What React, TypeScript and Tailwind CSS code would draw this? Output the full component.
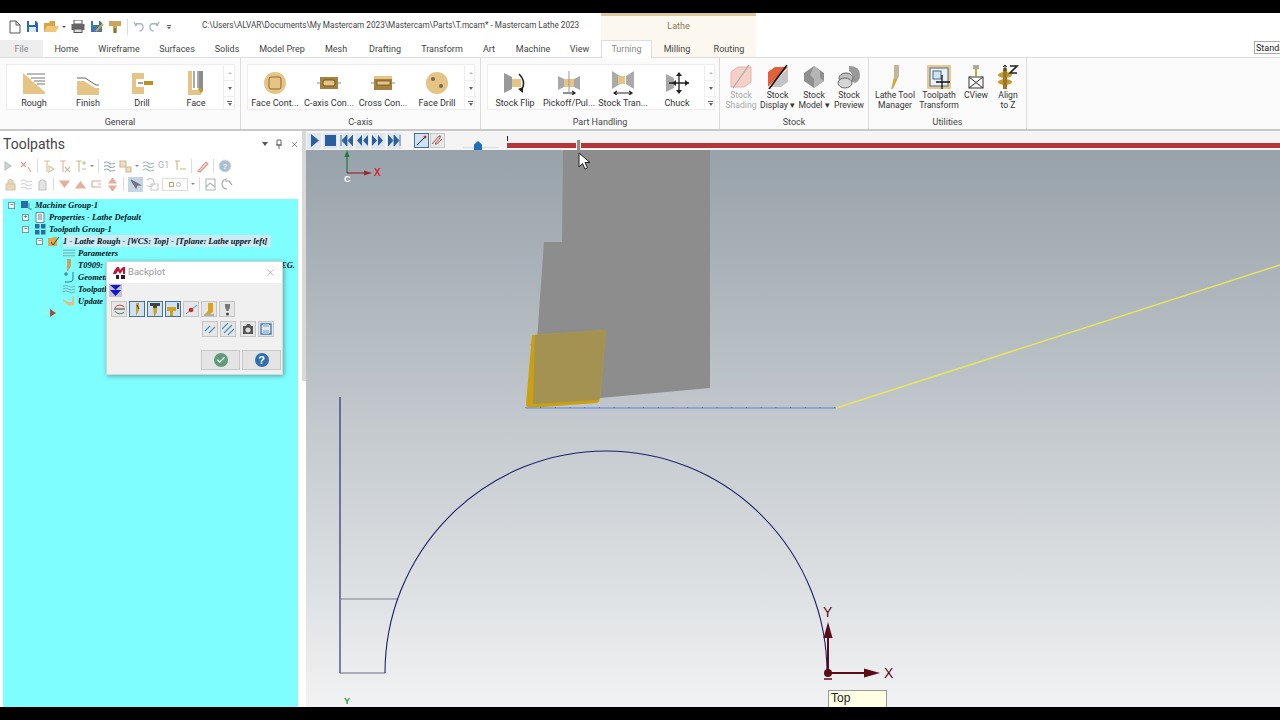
import React from 'react';
import { Check, X } from 'lucide-react';

const TAN = '#e6c485';
const DARK = '#a5813f';

const tabs = [
  { label: 'Home', cls: 'w-[47px]' },
  { label: 'Wireframe', cls: 'w-[58px]' },
  { label: 'Surfaces', cls: 'w-[58px]' },
  { label: 'Solids', cls: 'w-[42px]' },
  { label: 'Model Prep', cls: 'w-[68px]' },
  { label: 'Mesh', cls: 'w-[40px]' },
  { label: 'Drafting', cls: 'w-[58px]' },
  { label: 'Transform', cls: 'w-[56px]' },
  { label: 'Art', cls: 'w-[38px]' },
  { label: 'Machine', cls: 'w-[50px]' },
  { label: 'View', cls: 'w-[43px]' },
];

function Svg({ size = 24, children }: { size?: number; children: React.ReactNode }) {
  return (
    <svg width={size} height={size} viewBox="0 0 24 24" fill="none" className="shrink-0">
      {children}
    </svg>
  );
}

// ribbon icons
const ic = {
  rough: (
    <Svg>
      <path d="M1 2 L23 21 V23 H1 Z" fill={TAN} />
      <path d="M5 3 H23 M9 7 H23 M12 10 H23 M15 13 H23" stroke="#777" strokeWidth="1" />
    </Svg>
  ),
  finish: (
    <Svg>
      <path d="M1 10 H8 L19 17 H23 V24 H1 Z" fill={TAN} />
      <path d="M1 7 H9 L20 14 H23" stroke="#666" strokeWidth="1" />
    </Svg>
  ),
  drill: (
    <Svg>
      <path d="M2 2 H14 V8 H6 V16 H14 V23 H2 Z" fill={TAN} />
      <path d="M8 12 H13" stroke="#888" strokeWidth="1.6" />
      <rect x="14" y="10" width="9" height="4" fill="#b8941f" />
    </Svg>
  ),
  face: (
    <Svg>
      <path d="M4 0 H8 V19 H17 V24 H4 Z" fill={TAN} />
      <path d="M10 0 V17 M14 0 V17" stroke="#555" strokeWidth="1" />
      <path d="M15 0 H19 V20 L17 22 L14 18 H15 Z" fill="#8c8c8c" />
      <path d="M14 17 L19 18 L17 22 Z" fill="#c9a012" />
    </Svg>
  ),
  faceCont: (
    <Svg>
      <circle cx="12" cy="12" r="11" fill={TAN} />
      <rect x="6" y="6" width="12" height="12" rx="2" fill={TAN} stroke="#8a6a30" strokeWidth="1" />
    </Svg>
  ),
  caxis: (
    <Svg>
      <path d="M0 12 H3 M21 12 H24" stroke="#888" strokeWidth="1" />
      <rect x="3" y="6" width="18" height="12" fill={DARK} />
      <rect x="6" y="9" width="12" height="6" rx="2" fill={TAN} stroke="#6e5526" strokeWidth="1" />
    </Svg>
  ),
  cross: (
    <Svg>
      <path d="M0 12 H3 M21 12 H24" stroke="#888" strokeWidth="1" />
      <rect x="3" y="5" width="18" height="14" fill={DARK} />
      <rect x="6" y="10" width="13" height="4" fill={TAN} stroke="#6e5526" strokeWidth="0.8" />
      <rect x="3" y="5" width="18" height="3" fill={TAN} />
    </Svg>
  ),
  faceDrill: (
    <Svg>
      <circle cx="12" cy="12" r="11" fill={TAN} />
      <circle cx="8" cy="8" r="2" fill="#7a6a50" />
      <circle cx="16" cy="15" r="2" fill="#7a6a50" />
    </Svg>
  ),
  flip: (
    <Svg>
      <path d="M1 2 L9 6 V18 L1 22 Z" fill="#999" />
      <rect x="9" y="8" width="9" height="8" fill={TAN} />
      <path d="M16 3 Q24 11 18 20" stroke="#222" strokeWidth="1.6" />
      <path d="M15 18 L20 22 L20 16 Z" fill="#222" />
    </Svg>
  ),
  pickoff: (
    <Svg>
      <path d="M1 5 L7 8 V16 L1 19 Z M23 5 L17 8 V16 L23 19 Z" fill="#a8a8a8" />
      <rect x="7" y="8" width="10" height="8" fill={TAN} />
      <path d="M12 0 V21" stroke="#999" strokeWidth="1" />
      <path d="M6 22 H18 M15 20 L18 22 L15 24" stroke="#222" strokeWidth="1.2" />
    </Svg>
  ),
  transfer: (
    <Svg>
      <path d="M1 0 L9 5 V13 L1 18 Z M23 0 L15 5 V13 L23 18 Z" fill="#aaa" />
      <rect x="7" y="5" width="7" height="8" fill={TAN} />
      <path d="M3 22 H21 M6 20 L3 22 L6 24 M18 20 L21 22 L18 24" stroke="#222" strokeWidth="1.2" />
    </Svg>
  ),
  chuck: (
    <Svg>
      <path d="M1 3 L9 7 V17 L1 21 Z" fill="#a8a8a8" />
      <path d="M14 2 V22 M4 12 H24" stroke="#222" strokeWidth="1.3" />
      <path d="M14 1 L11 5 H17 Z M14 23 L11 19 H17 Z M24 12 L20 9 V15 Z M7 12 L11 9 V15 Z" fill="#222" />
    </Svg>
  ),
  shading: (
    <Svg>
      <path d="M2 7 L9 2 L22 2 V17 L15 22 H2 Z" fill="#f5d0c8" stroke="#e3b5ac" strokeWidth="1" />
      <path d="M4 23 L20 0" stroke="#a8a8a8" strokeWidth="1.2" />
    </Svg>
  ),
  display: (
    <Svg>
      <path d="M2 7 L9 2 H22 L2 22 Z" fill="#e0603a" />
      <path d="M22 3 V17 L15 22 H4 Z" fill="#c4c4c4" />
      <path d="M3 24 L21 0" stroke="#111" strokeWidth="1.6" />
    </Svg>
  ),
  model: (
    <Svg>
      <path d="M2 8 L12 1 L22 8 V16 L12 23 L2 16 Z" fill="#8f8f8f" />
      <path d="M12 1 L18 6 V13 L22 16 L12 23 V14 L8 10 Z" fill="#b5b5b5" />
    </Svg>
  ),
  preview: (
    <Svg>
      <path d="M12 1 Q23 1 23 10 Q23 16 18 18 L14 16 Q18 10 12 6 Z" fill="#999" />
      <ellipse cx="9" cy="13" rx="7" ry="5" fill="#c0c0c0" stroke="#666" strokeWidth="1" />
      <ellipse cx="8" cy="18" rx="7" ry="5" fill="#d5d5d5" stroke="#666" strokeWidth="1" />
    </Svg>
  ),
  tool: (
    <Svg>
      <path d="M11 0 H16 V11 L10 24 H8 L11 12 Z" fill="#c2b79a" />
      <path d="M11 14 L14 14 L9 24 Z" fill="#e0a800" />
    </Svg>
  ),
  transform: (
    <Svg>
      <rect x="0" y="0" width="24" height="24" fill="#e8c98e" />
      <rect x="3" y="3" width="18" height="18" fill="#e9f1f8" stroke="#4d6a85" strokeWidth="1" />
      <rect x="6" y="6" width="8" height="8" fill="#cfe0ee" stroke="#4d6a85" strokeWidth="1" />
      <path d="M15 10 V24 M9 17 H23" stroke="#111" strokeWidth="1.3" />
    </Svg>
  ),
  cview: (
    <Svg>
      <path d="M9 0 H15 V4 H9 Z" fill="#aaa" />
      <path d="M11 4 H13 V11 H11 Z" fill="#d1a21c" />
      <rect x="5" y="12" width="14" height="11" stroke="#333" strokeWidth="1" />
      <path d="M5 12 L19 23 M19 12 L5 23" stroke="#333" strokeWidth="1" />
    </Svg>
  ),
  align: (
    <Svg>
      <ellipse cx="9" cy="10" rx="7" ry="3" fill="#c79a2c" />
      <ellipse cx="9" cy="17" rx="7" ry="3" fill="#c79a2c" />
      <rect x="7" y="3" width="4" height="21" fill="#9c7622" />
      <path d="M9 0 V6 M7 2 L9 0 L11 2" stroke="#222" strokeWidth="1" />
      <path d="M14 1 H21 L14 8 H21" stroke="#222" strokeWidth="1.6" />
    </Svg>
  ),
};

function RibbonBtn({ icon, label }: { icon: React.ReactNode; label: string }) {
  return (
    <div className="w-[54px] h-full flex flex-col items-center shrink-0">
      <div className="h-[24px] mt-[6px]">{icon}</div>
      <span className="mt-[2px] text-[9px] leading-[12px] text-[#333] whitespace-nowrap">{label}</span>
    </div>
  );
}

function Scroller() {
  return (
    <div className="w-[12px] h-full border-l border-[#eeeeee] flex flex-col text-[#777] shrink-0">
      <div className="h-[16px] border-b border-[#eeeeee] flex items-center justify-center">
        <div className="w-0 h-0 border-x-[2px] border-x-transparent border-b-[2px] border-b-[#bbbbbb]" />
      </div>
      <div className="h-[16px] border-b border-[#eeeeee] flex items-center justify-center">
        <div className="w-0 h-0 border-x-[2.5px] border-x-transparent border-t-[3px] border-t-[#666666]" />
      </div>
      <div className="flex-1 flex flex-col items-center justify-center gap-[1px]">
        <div className="w-[5px] h-px bg-[#666666]" />
        <div className="w-0 h-0 border-x-[2.5px] border-x-transparent border-t-[3px] border-t-[#666666]" />
      </div>
    </div>
  );
}

function Group({ label, cls, inner, children }: { label: string; cls: string; inner?: string; children: React.ReactNode }) {
  return (
    <div className={`${cls} h-full flex flex-col border-r border-[#dddddd] shrink-0`}>
      <div className={`h-[48px] mt-[6px] flex ${inner ?? 'ml-[6px]'}`}>{children}</div>
      <div className="flex-1 flex items-center justify-center text-[9px] text-[#444] pt-[6px]">{label}</div>
    </div>
  );
}

function Gallery({ cls, children }: { cls: string; children: React.ReactNode }) {
  return (
    <div className={`${cls} h-full flex bg-white border border-[#eeeeee] justify-between`}>
      <div className="flex">{children}</div>
      <Scroller />
    </div>
  );
}

function BigBtn({ icon, lines, cls, muted }: { icon: React.ReactNode; lines: React.ReactNode[]; cls: string; muted?: boolean }) {
  return (
    <div className={`${cls} flex flex-col items-center shrink-0 ${muted ? 'text-[#aaaaaa]' : 'text-[#333]'}`}>
      <div className="h-[24px] mt-[1px]">{icon}</div>
      <div className="mt-[2px] text-[8.6px] leading-[9.500px] text-center whitespace-nowrap">
        {lines.map((l, i) => (
          <div key={i}>{l}</div>
        ))}
      </div>
    </div>
  );
}

// quick access toolbar
function QuickAccess() {
  return (
    <div className="w-[190px] flex items-center pl-[9px] gap-[5px]">
      <svg width="12" height="14" viewBox="0 0 12 14"><path d="M1 1 H7 L11 5 V13 H1 Z M7 1 V5 H11" fill="#fff" stroke="#555" /></svg>
      <svg width="13" height="13" viewBox="0 0 13 13"><path d="M1 1 H10 L12 3 V12 H1 Z" fill="#2a6aa8" /><rect x="3" y="1" width="6" height="4" fill="#fff" /><rect x="3" y="7" width="7" height="5" fill="#dbe7f2" /></svg>
      <svg width="15" height="13" viewBox="0 0 15 13"><path d="M0 3 H5 L6 1 H11 V12 H0 Z" fill="#d9a33f" /><path d="M3 6 H15 L12 12 H0 Z" fill="#efc777" /></svg>
      <div className="w-0 h-0 -ml-[2px] border-x-[2px] border-x-transparent border-t-[2px] border-t-[#555555]" />
      <svg width="14" height="13" viewBox="0 0 14 13"><rect x="3" y="0" width="8" height="4" fill="#fff" stroke="#555" /><rect x="0.5" y="4" width="13" height="6" fill="#666" /><rect x="3" y="9" width="8" height="3.5" fill="#ddd" stroke="#555" /></svg>
      <svg width="14" height="13" viewBox="0 0 14 13"><path d="M1 1 H10 L12 3 V12 H1 Z" fill="#3d78b2" /><rect x="3" y="1" width="6" height="4" fill="#fff" /><path d="M6 11 L13 4" stroke="#d9a33f" strokeWidth="2" /></svg>
      <svg width="13" height="14" viewBox="0 0 13 14"><path d="M0 1 H12 V6 H8 V13 H4 V6 H0 Z" fill="#c9a45a" /><rect x="5" y="8" width="2" height="5" fill="#8a7038" /></svg>
      <div className="w-px h-[16px] bg-[#dddddd]" />
      <svg width="11" height="11" viewBox="0 0 12 12"><path d="M3 3 H8 Q11 3 11 7 Q11 10 7 11 M1 1 L3 5 L6 2" stroke="#a9b4c2" strokeWidth="1.4" fill="none" /></svg>
      <svg width="11" height="11" viewBox="0 0 12 12"><path d="M9 3 H4 Q1 3 1 7 Q1 10 5 11 M11 1 L9 5 L6 2" stroke="#a9b4c2" strokeWidth="1.4" fill="none" /></svg>
      <div className="flex flex-col items-center gap-[1px] ml-[2px]">
        <div className="w-[4px] h-px bg-[#555555]" />
        <div className="w-0 h-0 border-x-[2px] border-x-transparent border-t-[2px] border-t-[#555555]" />
      </div>
    </div>
  );
}

// faded panel toolbar icons
function T({ d, c = '#9aa5ad', fill }: { d: string; c?: string; fill?: string }) {
  return (
    <svg width="13" height="13" viewBox="0 0 13 13" className="shrink-0 opacity-80">
      <path d={d} stroke={c} strokeWidth="1.1" fill={fill ?? 'none'} />
    </svg>
  );
}
const Sep = () => <div className="w-px h-[14px] bg-[#dddddd] mx-[1px] shrink-0" />;
const Drop = () => <div className="w-0 h-0 border-x-[2px] border-x-transparent border-t-[2px] border-t-[#888888] shrink-0" />;

function PanelToolbars() {
  const waves = 'M1 3 Q4 1 6 3 T12 3 M1 6.500 Q4 4.500 6 6.500 T12 6.500 M1 10 Q4 8 6 10 T12 10';
  return (
    <div className="pl-[4px] h-[36px] flex flex-col text-[#999]">
      <div className="h-[18px] flex items-center gap-[3px]">
        <T d="M1 2 L7 6 L1 10 Z" c="#a8b0b0" fill="#c6cdc9" />
        <T d="M1 2 L6 7 M6 2 L1 7 M8 7 L11 12" c="#d98080" />
        <Sep />
        <T d="M2 1 H8 M5 1 V12 M7 6 L12 9 L7 12 Z" c="#c6b37f" />
        <T d="M2 1 H8 M5 1 V12 M7 7 L12 12 M12 7 L7 12" c="#d8a18a" />
        <T d="M2 1 H8 M5 1 V12 M8 3 H12 M10 1 V5 M8 9 H12" c="#b9ad7a" />
        <Drop />
        <Sep />
        <T d={waves} c="#7d95a8" />
        <T d="M1 1 H7 V7 H1 Z M7 7 H12 V12 H7 Z" c="#c4a878" fill="#e5d6b6" />
        <Drop />
        <T d={waves} c="#8da0ae" />
        <span className="text-[9px] w-[13px] text-[#b5b5b5]">G1</span>
        <T d="M3 1 V10 M1 1 H6 M6 9 H12" c="#c2a65f" />
        <Sep />
        <T d="M2 11 L10 2 L12 4 L4 12 Z" c="#d47a7a" fill="#f0d6a8" />
        <Sep />
        <svg width="14" height="14" viewBox="0 0 14 14" className="shrink-0">
          <circle cx="7" cy="7" r="6" fill="#a9bdd4" stroke="#d5dee8" />
          <text x="7" y="10" fontSize="8" fontWeight="700" textAnchor="middle" fill="#fff" fontFamily="Liberation Sans, sans-serif">?</text>
        </svg>
      </div>
      <div className="h-[18px] flex items-center gap-[3px]">
        <T d="M2 6 H11 V12 H2 Z M4 6 V3 Q6.500 0 9 3 V6" c="#c8b68f" fill="#dfcfa9" />
        <T d={waves} c="#c5c9c9" />
        <T d="M3 12 V4 Q6.500 0 10 4 V12 Z" c="#b5b5b5" fill="#dddddd" />
        <Sep />
        <T d="M2 3 H11 L6.500 9 Z" c="#e09a85" fill="#e09a85" />
        <T d="M2 10 H11 L6.500 4 Z" c="#e09a85" fill="#e09a85" />
        <T d="M2 3 H11 M2 3 V9 H11 M8 6 H11" c="#d98f7a" />
        <T d="M6.500 0 L10 5 H3 Z M6.500 13 L10 8 H3 Z" c="#e09a85" fill="#e09a85" />
        <Sep />
        <div className="w-[15px] h-[15px] bg-[#c5d5e4] flex items-center justify-center shrink-0">
          <T d="M2 2 L7 10 L8 7 L11 7 Z" c="#556" fill="#667" />
        </div>
        <T d="M1 2 A4 4 0 1 1 1 7 M5 6 H12 V12 H5 Z" c="#bcbcbc" />
        <div className="w-[26px] h-[13px] border border-[#dddddd] flex items-center justify-center gap-[2px] shrink-0">
          <div className="w-[5px] h-[5px] border border-[#c2a65f]" />
          <div className="w-[5px] h-[5px] rounded-full border border-[#bbbbbb]" />
        </div>
        <Drop />
        <Sep />
        <T d="M2 1 H11 V12 H2 Z M2 9 L6 5 L11 9" c="#9aa5ad" />
        <T d="M7 1 A5 5 0 1 0 7 11 M5 3 H9 L12 7" c="#7c8a9c" />
      </div>
    </div>
  );
}

function TreeRow({ pad, icon, box, children }: { pad: string; icon?: React.ReactNode; box?: '+' | '-'; children: React.ReactNode }) {
  return (
    <div className={`h-[12px] flex items-center ${pad} whitespace-nowrap`}>
      {box && (
        <div className="w-[7px] h-[7px] border border-[#7a9a9a] bg-[#e6fbfb] flex items-center justify-center text-[7px] leading-none text-[#334] mr-[5px] shrink-0">
          {box === '+' ? '+' : '−'}
        </div>
      )}
      <div className="w-[12px] h-[12px] flex items-center justify-center mr-[2px] shrink-0">{icon}</div>
      {children}
    </div>
  );
}

function Tree() {
  return (
    <div className="relative ml-[3px] w-[295px] h-[508px] bg-[#7ffeff] text-[#03141c] text-[8.5px] font-bold italic font-['Liberation_Serif',serif]">
      <TreeRow pad="pl-[5px]" box="-" icon={<svg width="12" height="10" viewBox="0 0 12 10"><path d="M1 1 H8 V8 H1 Z" fill="#2a6aa8" /><path d="M9 3 V9 H12" stroke="#4c8a8a" fill="none" /></svg>}>
        <span className="ml-[1px]">Machine Group-1</span>
      </TreeRow>
      <TreeRow pad="pl-[19px]" box="+" icon={<svg width="10" height="11" viewBox="0 0 10 11"><path d="M1 .5 H9 V10.500 H1 Z M3 3 H7 M3 5 H7 M3 7 H7" stroke="#667" fill="#eaf7f7" strokeWidth=".8" /></svg>}>
        <span className="ml-[1px]">Properties - Lathe Default</span>
      </TreeRow>
      <TreeRow pad="pl-[19px]" box="-" icon={<svg width="11" height="11" viewBox="0 0 11 11"><path d="M0 0 H4.500 V4.500 H0 Z M6 0 H10.500 V4.500 H6 Z M0 6 H4.500 V10.500 H0 Z M6 6 H10.500 V10.500 H6 Z" fill="#2a6aa8" /></svg>}>
        <span className="ml-[1px]">Toolpath Group-1</span>
      </TreeRow>
      <TreeRow pad="pl-[33px]" box="-" icon={<svg width="12" height="11" viewBox="0 0 12 11"><path d="M0 2 H4 L5 1 H9 V10 H0 Z" fill="#e0a94f" /><path d="M3 6 L5 9 L11 1" stroke="#444" fill="none" /></svg>}>
        <span className="ml-[1px] bg-[#cde9f4] pr-[2px] w-[208px]">1 - Lathe Rough - [WCS: Top] - [Tplane: Lathe upper left]</span>
      </TreeRow>
      <TreeRow pad="pl-[60px]" icon={<svg width="13" height="10" viewBox="0 0 13 10"><path d="M0 2 H13 M0 5 H13 M0 8 H13" stroke="#6f9aa0" strokeWidth=".9" /></svg>}>
        <span className="ml-[1px]">Parameters</span>
      </TreeRow>
      <TreeRow pad="pl-[60px]" icon={<svg width="8" height="12" viewBox="0 0 8 12"><path d="M2 0 H6 V7 L3 12 H2 Z" fill="#c9a45a" /></svg>}>
        <span className="ml-[1px] w-[217px] flex justify-between">
          <span>T0909:</span>
          <span>OD ROUGH RIGHT - 80 DEG.</span>
        </span>
      </TreeRow>
      <TreeRow pad="pl-[60px]" icon={<svg width="12" height="12" viewBox="0 0 12 12"><path d="M5 3 H1 M3 1 V5 M10 1 V8 Q10 11 6 11 H2" stroke="#2b7a7a" fill="none" /></svg>}>
        <span className="ml-[1px]">Geometry</span>
      </TreeRow>
      <TreeRow pad="pl-[60px]" icon={<svg width="13" height="10" viewBox="0 0 13 10"><path d="M0 2 Q3 0 6 2 T13 2 M0 5 Q3 3 6 5 T13 5 M0 8 Q3 6 6 8 T13 8" stroke="#6f9aa0" fill="none" strokeWidth=".9" /></svg>}>
        <span className="ml-[1px]">Toolpath</span>
      </TreeRow>
      <TreeRow pad="pl-[60px]" icon={<svg width="13" height="12" viewBox="0 0 13 12"><path d="M0 6 L6 11 H12 V1 L10 1 V7 H6 L0 4 Z" fill="#e0be84" /></svg>}>
        <span className="ml-[1px]">Update</span>
      </TreeRow>
      {/* tree guide lines */}
      <div className="absolute left-[41px] top-[43px] w-px h-[70px] border-l border-dotted border-[#b7f5b0]" />
      <div className="absolute left-[41px] top-[113px] w-[6px] h-px border-t border-dotted border-[#b7f5b0]" />
      <div className="absolute left-[47px] top-[110px] w-0 h-0 border-y-[4px] border-y-transparent border-l-[6px] border-l-[#b04a3a]" />
    </div>
  );
}

function DlgBtn({ cls, active, children }: { cls?: string; active?: boolean; children: React.ReactNode }) {
  return (
    <div className={`w-[16px] h-[16px] flex items-center justify-center border shrink-0 ${active ? 'bg-[#cde3f5] border-[#4a6d94]' : 'bg-[#e6e6e6] border-[#c4c4c4]'} ${cls ?? ''}`}>
      {children}
    </div>
  );
}

function Backplot() {
  return (
    <div className="absolute left-[106px] top-[130px] w-[177px] h-[114px] bg-[#f0f0f0] border border-[#d5d5d5] shadow-[1px_1px_5px_rgba(0,0,0,0.35)] flex flex-col">
      <div className="h-[21px] bg-white flex items-center pl-[6px] pr-[6px] shrink-0">
        <svg width="13" height="13" viewBox="0 0 13 13" className="mr-[1px]">
          <path d="M1 5 L4 1 H6 L7 4 L10 1 H12 V8 H10 V4 L7 8 L5 5 L3 8 H0 Z" fill="#b5183a" />
          <path d="M3 9 H6 V13 H3 Z M8 9 H12 V13 H8 Z" fill="#44121f" />
        </svg>
        <span className="ml-[1px] text-[9.5px] text-[#9a9a9a]">Backplot</span>
        <X size={11} strokeWidth={1.2} className="ml-auto text-[#8f8f8f]" />
      </div>
      <div className="pl-[2px] pt-[1px]">
        <div className="w-[13px] h-[13px] bg-[#c4c4d0] flex items-center justify-center">
          <svg width="11" height="11" viewBox="0 0 11 11"><path d="M0 0 H11 L5.500 5 Z M0 5 H11 L5.500 11 Z" fill="#1414cc" /></svg>
        </div>
      </div>
      <div className="flex gap-[2px] pl-[4px] mt-[4px]">
        <DlgBtn>
          <svg width="13" height="13" viewBox="0 0 13 13"><path d="M1 6 H12" stroke="#3a3a3a" /><path d="M2 5 A5 4 0 0 1 11 4" stroke="#c44a3a" fill="none" /><path d="M2 8 A5 4 0 0 0 11 9" stroke="#3a8a5a" fill="none" /></svg>
        </DlgBtn>
        <DlgBtn active>
          <svg width="11" height="13" viewBox="0 0 11 13"><path d="M4 0 H7 V7 L4 13 Z" fill="#d1a21c" /><path d="M5 2 L7 6" stroke="#333" /></svg>
        </DlgBtn>
        <DlgBtn active>
          <svg width="12" height="13" viewBox="0 0 12 13"><path d="M1 0 H11 V3 H8 V5 H4 V3 H1 Z" fill="#444" /><path d="M4 5 H8 V9 L6 13 H5 Z" fill="#d1a21c" /></svg>
        </DlgBtn>
        <DlgBtn active>
          <svg width="13" height="13" viewBox="0 0 13 13"><path d="M0 4 H9 V8 H6 V13 H3 V8 H0 Z" fill="#d1a21c" /><path d="M10 0 H12 V6 H10 Z" fill="#555" /></svg>
        </DlgBtn>
        <DlgBtn>
          <svg width="13" height="13" viewBox="0 0 13 13"><path d="M1 11 L12 2" stroke="#4a9ad0" /><circle cx="6" cy="7" r="2.300" fill="#d8262c" /></svg>
        </DlgBtn>
        <DlgBtn>
          <svg width="11" height="13" viewBox="0 0 11 13"><path d="M4 0 H9 V9 L6 11 H1 L4 8 Z" fill="#d9a520" /><path d="M0 12 H10" stroke="#777" /></svg>
        </DlgBtn>
        <DlgBtn>
          <svg width="9" height="13" viewBox="0 0 9 13"><path d="M2 1 H7 V4 L5.500 8 H3.500 L2 4 Z" fill="#777" /><circle cx="4.500" cy="11" r="1.500" fill="#444" /></svg>
        </DlgBtn>
      </div>
      <div className="flex pl-[95px] mt-[4px]">
        <DlgBtn><svg width="12" height="12" viewBox="0 0 12 12"><path d="M1 8 L6 3 M5 10 L11 4" stroke="#4a8fc0" strokeWidth="1.200" /></svg></DlgBtn>
        <DlgBtn cls="ml-[2px]"><svg width="12" height="12" viewBox="0 0 12 12"><path d="M0 6 L6 0 M2 10 L10 2 M6 12 L12 6" stroke="#4a8fc0" strokeWidth="1.200" /></svg></DlgBtn>
        <DlgBtn cls="ml-[4px]"><svg width="12" height="11" viewBox="0 0 12 11"><path d="M1 2 H4 L5 0 H8 L9 2 H11 V10 H1 Z" fill="#555" /><circle cx="6" cy="6" r="2.500" fill="#ddd" /></svg></DlgBtn>
        <DlgBtn cls="ml-[2px]"><svg width="12" height="12" viewBox="0 0 12 12"><path d="M1 1 H11 V11 H1 Z" fill="none" stroke="#3d78b2" strokeWidth="1.300" /><path d="M3 1 H9 V4 H3 Z M3 7 H9 V11 H3 Z" fill="#a9c6e0" /></svg></DlgBtn>
      </div>
      <div className="flex gap-[2px] pl-[94px] mt-auto mb-[4px]">
        <div className="w-[39px] h-[20px] bg-[#e4e4e4] border border-[#c8c8c8] flex items-center justify-center">
          <div className="w-[14px] h-[14px] rounded-full bg-[#5f9a7a] flex items-center justify-center">
            <Check size={10} strokeWidth={3} className="text-white" />
          </div>
        </div>
        <div className="w-[39px] h-[20px] bg-[#e4e4e4] border border-[#c8c8c8] flex items-center justify-center">
          <div className="w-[14px] h-[14px] rounded-full bg-[#2f6fae] flex items-center justify-center text-white text-[11px] font-bold leading-none font-['Liberation_Sans',sans-serif]">?</div>
        </div>
      </div>
    </div>
  );
}

function Playback() {
  const box = 'w-[14px] h-[16px] flex items-center justify-center bg-[#dfe6ee] shrink-0';
  return (
    <div className="h-[19px] bg-[#f4f4f4] flex items-center relative shrink-0">
      <div className="flex gap-[2px] ml-[1px]">
        <div className={box}><svg width="9" height="13" viewBox="0 0 9 13"><path d="M1 0 L9 6.500 L1 13 Z" fill="#2a5f9e" /></svg></div>
        <div className={box}><div className="w-[11px] h-[11px] bg-[#2a5f9e]" /></div>
        <div className={box}><svg width="13" height="11" viewBox="0 0 13 11"><path d="M1 0 V11 M7 0 L2 5.500 L7 11 Z M13 0 L8 5.500 L13 11 Z" stroke="#2a5f9e" fill="#2a5f9e" strokeWidth=".8" /></svg></div>
        <div className={box}><svg width="12" height="11" viewBox="0 0 12 11"><path d="M6 0 L1 5.500 L6 11 Z M12 0 L7 5.500 L12 11 Z" fill="#2a5f9e" /></svg></div>
        <div className={box}><svg width="12" height="11" viewBox="0 0 12 11"><path d="M0 0 L5 5.500 L0 11 Z M6 0 L11 5.500 L6 11 Z" fill="#2a5f9e" /></svg></div>
        <div className={box}><svg width="13" height="11" viewBox="0 0 13 11"><path d="M12 0 V11 M0 0 L5 5.500 L0 11 Z M6 0 L11 5.500 L6 11 Z" stroke="#2a5f9e" fill="#2a5f9e" strokeWidth=".8" /></svg></div>
      </div>
      <div className="ml-[13px] w-[15px] h-[15px] bg-[#cde3f5] border border-[#4a6d94] flex items-center justify-center">
        <svg width="11" height="11" viewBox="0 0 11 11"><path d="M1 10 L9 2" stroke="#223" /><circle cx="9" cy="2" r="1.500" fill="#c8242c" /></svg>
      </div>
      <div className="ml-[1px] w-[15px] h-[15px] bg-[#e8e8e8] border border-[#c8c8c8] flex items-center justify-center">
        <svg width="13" height="13" viewBox="0 0 13 13"><path d="M1 10 L8 2 Q10 1 9 4 L4 10 Q6 11 11 5" stroke="#9a4a4a" fill="none" /></svg>
      </div>
      {/* speed slider */}
      <div className="absolute left-[157px] top-[16px] w-[36px] h-px bg-[#dddddd]" />
      <div className="absolute left-[168px] top-[10px] w-[8px] h-[9px] bg-[#1f6fb5] [clip-path:polygon(50%_0,100%_40%,100%_100%,0_100%,0_40%)]" />
      {/* position bar */}
      <div className="absolute left-[201px] top-[12px] right-0 h-[5px] bg-[#b6353b]" />
      <div className="absolute left-[201px] top-[5px] w-px h-[5px] bg-[#222222]" />
      <div className="absolute left-[270px] top-[9px] w-[5px] h-[10px] bg-[#8d8d85] border-x border-[#eeeeee]" />
    </div>
  );
}

function Viewport() {
  const ticks = Array.from({ length: 22 }, (_, i) => 526 + i * 14.700);
  return (
    <div className="relative flex-1 overflow-hidden bg-linear-to-b from-[#98a2aa] to-[#f1f2f3] font-['Liberation_Sans',sans-serif]">
      <svg width="974" height="557" viewBox="306 150 974 557" className="absolute inset-0">
        {/* tool */}
        <path d="M563 150 H710 V388 L600 398 L530 345 L537 340 L544 242 H562 Z" fill="#8d8d8d" />
        <path d="M532 335 L606 330 L600 399 Q599 403 596 403 L530 408 Q526 408 526 404 Z" fill="#c9a012" />
        <path d="M535 335 L606 330 L600 397 Q599 400 596 400 L533 404 Z" fill="#a39252" />
        {/* toolpath */}
        <path d="M526 408 H836" stroke="#7a9ae0" strokeWidth="1.500" />
        {ticks.map((x) => (
          <path key={x} d={`M${x} 407 V408`} stroke="#555" strokeWidth=".7" />
        ))}
        <path d="M836 408 L1280 265" stroke="#e6e65e" strokeWidth="1.500" />
        {/* part profile */}
        <path d="M340 397 V673" stroke="#20246a" strokeWidth="1.100" />
        <path d="M340 673 H385" stroke="#6a6c84" strokeWidth="1.200" />
        <path d="M340 599 H398" stroke="#7c7e92" strokeWidth="1.200" />
        <path d="M385 673 A221 222 0 0 1 827 673" stroke="#1c2268" strokeWidth="1.100" fill="none" />
        {/* small gnomon */}
        <path d="M347 173 V155" stroke="#1c7a3c" strokeWidth="1.200" />
        <path d="M347 150 L344.500 157 H349.500 Z" fill="#1c7a3c" />
        <path d="M347 173 H367" stroke="#9a2a2a" strokeWidth="1.200" />
        <path d="M372 173 L364 170.500 V175.500 Z" fill="#9a2a2a" />
        {/* main gnomon */}
        <path d="M828 673 V632" stroke="#5a0c18" strokeWidth="2" />
        <path d="M828 622 L823.500 638 H832.500 Z" fill="#5a0c18" />
        <circle cx="828" cy="673" r="4" fill="#5a0c18" />
        <path d="M824 679 H832" stroke="#5a0c18" strokeWidth="1.500" />
        <path d="M830 673 H866" stroke="#5a0c18" strokeWidth="2" />
        <path d="M880 673 L864 668.500 V677.500 Z" fill="#5a0c18" />
      </svg>
      <span className="absolute left-[68px] top-[18px] text-[10px] font-bold text-[#d8262c] leading-none">X</span>
      <span className="absolute left-[38px] top-[25px] text-[9px] font-bold text-white leading-none">C</span>
      <span className="absolute left-[38px] bottom-[1px] text-[9px] font-bold text-[#1c9a3c] leading-none">Y</span>
      <span className="absolute left-[517px] top-[455px] text-[14px] text-[#5a0c18] leading-none">Y</span>
      <span className="absolute left-[578px] top-[516px] text-[14px] text-[#5a0c18] leading-none">X</span>
      <div className="absolute left-[522px] bottom-0 w-[59px] h-[17px] bg-[#ffffe4] border border-b-0 border-[#9a9a9a] text-[12px] pl-[2px] text-[#222] leading-[15px]">Top</div>
      {/* mouse pointer */}
      <svg width="13" height="18" viewBox="0 0 13 18" className="absolute left-[272px] top-[2px]">
        <path d="M1 1 V15 L4.500 11.500 L7 17 L9.500 16 L7 10.500 H12 Z" fill="#fff" stroke="#222" />
      </svg>
    </div>
  );
}

export default function App() {
  return (
    <div className="w-[1280px] h-[720px] bg-black overflow-hidden flex flex-col font-['Roboto','Open_Sans',sans-serif]">
      <div className="h-[13px] shrink-0" />

      {/* title row */}
      <div className="h-[27px] bg-white flex shrink-0">
        <QuickAccess />
        <div className="w-[411px] pl-[12px] pt-[5px] text-[8.200px] leading-[14px] text-[#444] whitespace-nowrap">
          C:\Users\ALVAR\Documents\My Mastercam 2023\Mastercam\Parts\T.mcam* - Mastercam Lathe 2023
        </div>
        <div className="w-[155px] bg-[#fdf8ef] border-t-[3px] border-[#dcc9a0] text-center text-[9px] text-[#8a7a5a] pt-[3px] leading-[14px]">
          Lathe
        </div>
      </div>

      {/* tabs */}
      <div className="h-[18px] bg-white flex shrink-0 border-b border-[#dddddd] relative text-[9px] text-[#444]">
        <div className="w-[43px] bg-[#eeeeee] text-center text-[#888] leading-[18px]">File</div>
        {tabs.map((t) => (
          <div key={t.label} className={`${t.cls} text-center leading-[18px]`}>
            {t.label}
          </div>
        ))}
        <div className="w-[51px] h-[18px] bg-white border border-b-0 border-[#dddddd] text-center text-[#888] leading-[17px] relative z-10">Turning</div>
        <div className="w-[50px] bg-[#fdf8ef] text-center leading-[18px]">Milling</div>
        <div className="w-[54px] bg-[#fdf8ef] text-center leading-[18px]">Routing</div>
        <div className="ml-auto mt-[1px] w-[26px] h-[13px] bg-white border border-r-0 border-[#aaaaaa] overflow-hidden text-[9px] leading-[12px] text-[#222] pl-[1px]">Standard</div>
      </div>

      {/* ribbon */}
      <div className="h-[73px] bg-[#fbfbfb] flex shrink-0 border-b-2 border-[#c8c8c8]">
        <Group label="General" cls="w-[241px]">
          <Gallery cls="w-[229px]">
            <RibbonBtn icon={ic.rough} label="Rough" />
            <RibbonBtn icon={ic.finish} label="Finish" />
            <RibbonBtn icon={ic.drill} label="Drill" />
            <RibbonBtn icon={ic.face} label="Face" />
          </Gallery>
        </Group>
        <Group label="C-axis" cls="w-[240px]">
          <Gallery cls="w-[228px]">
            <RibbonBtn icon={ic.faceCont} label="Face Cont..." />
            <RibbonBtn icon={ic.caxis} label="C-axis Con..." />
            <RibbonBtn icon={ic.cross} label="Cross Con..." />
            <RibbonBtn icon={ic.faceDrill} label="Face Drill" />
          </Gallery>
        </Group>
        <Group label="Part Handling" cls="w-[239px]">
          <Gallery cls="w-[228px]">
            <RibbonBtn icon={ic.flip} label="Stock Flip" />
            <RibbonBtn icon={ic.pickoff} label="Pickoff/Pul..." />
            <RibbonBtn icon={ic.transfer} label="Stock Tran..." />
            <RibbonBtn icon={ic.chuck} label="Chuck" />
          </Gallery>
        </Group>
        <Group label="Stock" cls="w-[149px]" inner="ml-[3px]">
          <BigBtn cls="w-[36px]" muted icon={ic.shading} lines={['Stock', 'Shading']} />
          <BigBtn cls="w-[37px]" icon={ic.display} lines={['Stock', 'Display ▾']} />
          <BigBtn cls="w-[36px]" icon={ic.model} lines={['Stock', 'Model ▾']} />
          <BigBtn cls="w-[34px]" icon={ic.preview} lines={['Stock', 'Preview']} />
        </Group>
        <Group label="Utilities" cls="w-[158px]" inner="ml-[3px]">
          <BigBtn cls="w-[46px]" icon={ic.tool} lines={['Lathe Tool', 'Manager']} />
          <BigBtn cls="w-[42px]" icon={ic.transform} lines={['Toolpath', 'Transform']} />
          <BigBtn cls="w-[32px]" icon={ic.cview} lines={['CView']} />
          <BigBtn cls="w-[32px]" icon={ic.align} lines={['Align', 'to Z']} />
        </Group>
      </div>

      {/* main area */}
      <div className="flex-1 min-h-0 flex">
        <div className="relative w-[306px] h-[576px] bg-white shrink-0">
          <div className="absolute right-0 top-0 w-[4px] h-[250px] bg-[#d8d8d8]" />
          <div className="h-[26px] flex items-center pl-[3px] pr-[7px]">
            <span className="text-[14px] text-[#444] leading-none -mt-[1px]">Toolpaths</span>
            <div className="ml-auto flex items-center gap-[7px] text-[#555]">
              <div className="w-0 h-0 border-x-[3.500px] border-x-transparent border-t-[4px] border-t-[#555555]" />
              <svg width="8" height="10" viewBox="0 0 8 10"><path d="M2 1 H6 V6 H2 Z M1 6 H7 M4 6 V10" stroke="#666" fill="none" /></svg>
              <X size={9} strokeWidth={1.800} className="text-[#555]" />
            </div>
          </div>
          <PanelToolbars />
          <div className="h-[6px]" />
          <Tree />
          <Backplot />
        </div>
        <div className="flex-1 min-w-0 flex flex-col h-[576px]">
          <Playback />
          <Viewport />
        </div>
      </div>

      <div className="h-[13px] shrink-0" />
    </div>
  );
}
